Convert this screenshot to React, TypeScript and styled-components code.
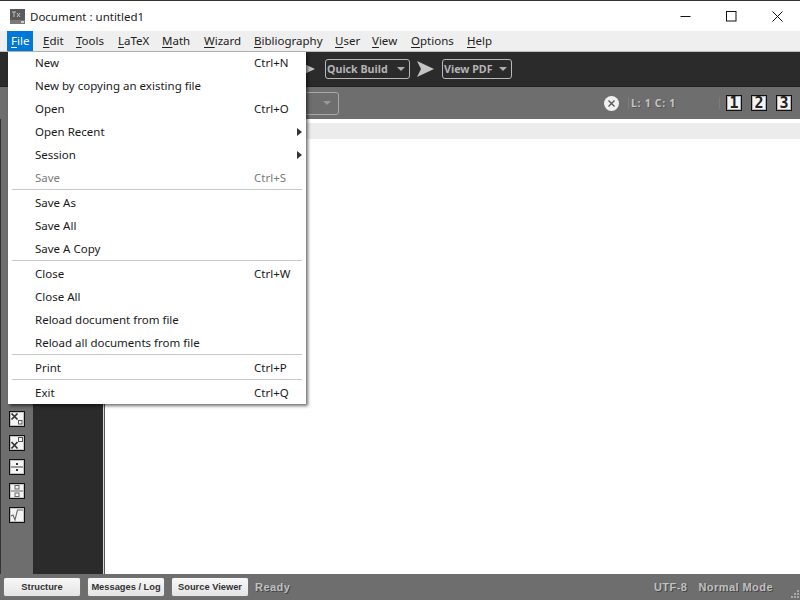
import React from 'react';
import styled, { createGlobalStyle } from 'styled-components';

const Global = createGlobalStyle`
  html, body { margin: 0; padding: 0; background: #fff; }
  #root { width: 800px; height: 600px; }
`;

const Win = styled.div`
  position: relative;
  width: 800px;
  height: 600px;
  overflow: hidden;
  display: flex;
  flex-direction: column;
  border-top: 1px solid #333;
  box-sizing: border-box;
  font-family: "Noto Sans", sans-serif;
  font-size: 11.5px;
  color: #111;
  background: #fff;
`;

const TitleBar = styled.div`
  height: 30px;
  display: flex;
  align-items: center;
  padding-left: 10px;
  flex: none;
`;
const TitleText = styled.span`
  margin-left: 5px;
  font-size: 11.5px;
  color: #222;
  flex: 1;
`;
const Ctl = styled.div`
  width: 46px;
  height: 30px;
  display: flex;
  align-items: center;
  justify-content: center;
`;

const MenuBar = styled.div`
  height: 21px;
  flex: none;
  background: #efefef;
  border-bottom: 1px solid #bdbdbd;
  display: flex;
  padding-left: 7px;
  box-sizing: border-box;
`;
const MenuItem = styled.div<{ $w: number; $on?: boolean }>`
  width: ${p => p.$w}px;
  margin-right: ${p => (p.$on ? 6 : 0)}px;
  padding-left: 4px;
  box-sizing: border-box;
  line-height: 20px;
  height: 20px;
  white-space: nowrap;
  background: ${p => (p.$on ? '#0078d7' : 'transparent')};
  color: ${p => (p.$on ? '#fff' : '#222')};
  u { text-underline-offset: 2px; }
`;

const Toolbar = styled.div`
  height: 35px;
  flex: none;
  background: #2b2b2b;
  border-bottom: 1px solid #222;
  box-sizing: border-box;
  display: flex;
  align-items: center;
  padding-left: 298px;
`;
const Drop = styled.div<{ $w: number; $ml: number }>`
  width: ${p => p.$w}px;
  margin-left: ${p => p.$ml}px;
  height: 20px;
  border: 1px solid #b8b8b8;
  border-radius: 3px;
  box-sizing: border-box;
  display: flex;
  align-items: center;
  justify-content: space-between;
  padding: 0 4px 0 1px;
  color: #b4b4b4;
  font-family: "Noto Sans", sans-serif;
  font-weight: 700;
  font-size: 10.7px;
`;
const Caret = styled.span<{ $c?: string }>`
  width: 0;
  height: 0;
  border-left: 4px solid transparent;
  border-right: 4px solid transparent;
  border-top: 4px solid ${p => p.$c || '#b0b0b0'};
`;

const SubBar = styled.div`
  height: 32px;
  flex: none;
  background: #6e6e6e;
  display: flex;
  align-items: center;
  padding-left: 139px;
  color: #c8c8c8;
`;
const Combo = styled.div`
  width: 200px;
  height: 23px;
  border: 1px solid #a8a8a8;
  border-radius: 3px;
  box-sizing: border-box;
  display: flex;
  align-items: center;
  justify-content: flex-end;
  padding-right: 7px;
`;
const ClearBtn = styled.div`
  width: 15px;
  height: 15px;
  margin-left: 265px;
  border-radius: 50%;
  background: #f0f0f0;
  display: flex;
  align-items: center;
  justify-content: center;
`;
const VSep = styled.div<{ $ml: number }>`
  width: 1px;
  height: 12px;
  margin-left: ${p => p.$ml}px;
  background: #7c7c7c;
`;
const Pos = styled.div`
  margin-left: 2px;
  width: 88px;
  font-family: "Noto Sans", sans-serif;
  font-weight: 700;
  font-size: 10.5px;
  letter-spacing: 0.7px;
  color: #c4c4c4;
  text-shadow: 1px 1px 0 #555;
`;
const NumBox = styled.div<{ $ml: number }>`
  width: 16px;
  height: 16px;
  margin-left: ${p => p.$ml}px;
  background: #f4f4f4;
  border: 1px solid #111;
  box-shadow: inset 0 0 0 1px rgba(0, 0, 0, 0.25);
  box-sizing: border-box;
  display: flex;
  align-items: center;
  justify-content: center;
  font-family: "DejaVu Sans Mono", monospace;
  font-weight: 700;
  font-size: 15px;
  color: #222;
`;

const Main = styled.div`
  flex: 1;
  display: flex;
  min-height: 0;
`;
const Side = styled.div`
  width: 32px;
  margin-left: 1px;
  background: #6e6e6e;
  display: flex;
  flex-direction: column;
  align-items: center;
  justify-content: flex-end;
  gap: 8px;
  padding-bottom: 51px;
  flex: none;
  box-sizing: border-box;
  box-shadow: -1px 0 0 #333;
`;
const Struct = styled.div`
  width: 70px;
  flex: none;
  background: #2b2b2b;
  border-right: 1px solid #d8d8d8;
  box-shadow: 1px 0 0 #555;
`;
const Editor = styled.div`
  flex: 1;
  background: #fff;
  padding-top: 4px;
  margin-left: 1px;
`;
const EditorLine = styled.div`
  height: 16px;
  background: #ececec;
`;
const MathBtn = styled.div`
  width: 16px;
  height: 16px;
  background: #f4f4f4;
  border: 1px solid #111;
  box-shadow: inset 0 0 0 1px rgba(0, 0, 0, 0.2);
  box-sizing: border-box;
  display: flex;
  margin-right: 1px;
`;

const Status = styled.div`
  height: 26px;
  flex: none;
  background: #6e6e6e;
  display: flex;
  align-items: center;
  padding: 0 0 0 4px;
  box-sizing: border-box;
  position: relative;
  font-family: "Liberation Sans", sans-serif;
`;
const StatusBtn = styled.div`
  width: 76px;
  height: 18px;
  margin-right: 8px;
  background: linear-gradient(#f8f8f8, #e4e4e4);
  border-radius: 2px;
  box-shadow: 0 0 1px #fff inset, 0 0 1px #999;
  display: flex;
  align-items: center;
  justify-content: center;
  font-weight: 700;
  font-size: 9.3px;
  color: #333;
`;
const StatusText = styled.div<{ $ml?: number; $mr?: number; $flex?: boolean }>`
  font-weight: 700;
  font-size: 11px;
  letter-spacing: 0.45px;
  color: #c0c0c0;
  text-shadow: 1px 1px 0 #444;
  margin-left: ${p => p.$ml ?? 0}px;
  margin-right: ${p => p.$mr ?? 0}px;
  flex: ${p => (p.$flex ? 1 : 'none')};
`;
const Grip = styled.svg`
  position: absolute;
  right: 0;
  bottom: 0;
`;

const Popup = styled.div`
  position: absolute;
  left: 8px;
  top: 51px;
  width: 298px;
  height: 352px;
  background: #fff;
  box-shadow: 0 -1px 0 #b0b0b0, 2px 2px 3px rgba(0, 0, 0, 0.55);
  box-sizing: border-box;
  color: #111;
`;
const Row = styled.div<{ $off?: boolean }>`
  height: 23px;
  line-height: 21px;
  padding-left: 27px;
  position: relative;
  display: flex;
  color: ${p => (p.$off ? '#7a7a7a' : '#1a1a1a')};
`;
const Label = styled.span`
  width: 219px;
  white-space: nowrap;
  flex: none;
`;
const Arrow = styled.span`
  position: absolute;
  right: 4px;
  top: 7px;
  width: 0;
  height: 0;
  border-top: 4.5px solid transparent;
  border-bottom: 4.5px solid transparent;
  border-left: 5px solid #333;
`;
const Sep = styled.div`
  height: 1px;
  margin: -1px 4px 2px;
  background: #c8c8c8;
`;

const menus: [string, string, number][] = [
  ['F', 'ile', 26],
  ['E', 'dit', 33],
  ['T', 'ools', 42],
  ['L', 'aTeX', 44],
  ['M', 'ath', 42],
  ['W', 'izard', 50],
  ['B', 'ibliography', 81],
  ['U', 'ser', 37],
  ['V', 'iew', 39],
  ['O', 'ptions', 56],
  ['H', 'elp', 40],
];

type It = { l: string; s?: string; off?: boolean; sub?: boolean } | 'sep';
const items: It[] = [
  { l: 'New', s: 'Ctrl+N' },
  { l: 'New by copying an existing file' },
  { l: 'Open', s: 'Ctrl+O' },
  { l: 'Open Recent', sub: true },
  { l: 'Session', sub: true },
  { l: 'Save', s: 'Ctrl+S', off: true },
  'sep',
  { l: 'Save As' },
  { l: 'Save All' },
  { l: 'Save A Copy' },
  'sep',
  { l: 'Close', s: 'Ctrl+W' },
  { l: 'Close All' },
  { l: 'Reload document from file' },
  { l: 'Reload all documents from file' },
  'sep',
  { l: 'Print', s: 'Ctrl+P' },
  'sep',
  { l: 'Exit', s: 'Ctrl+Q' },
];

const Play = ({ ml }: { ml: number }) => (
  <svg width="18" height="18" viewBox="0 0 18 18" style={{ marginLeft: ml }}>
    <path d="M0 1 L17 9 L0 17 L4 9 Z" fill="#c4c4c4" />
  </svg>
);

const MathIcon = ({ kind }: { kind: number }) => (
  <svg width="14" height="14" viewBox="0 0 14 14">
    {kind === 0 && (
      <>
        <path d="M1.5 1.5 L7.5 7.5 M7.5 1.5 L1.5 7.5" stroke="#333" strokeWidth="1.7" />
        <rect x="8.5" y="8.5" width="3.5" height="3.5" fill="none" stroke="#555" />
      </>
    )}
    {kind === 1 && (
      <>
        <path d="M1.5 6 L7.5 12.5 M7.5 6 L1.5 12.5" stroke="#333" strokeWidth="1.7" />
        <rect x="8.5" y="1.5" width="4" height="4" fill="none" stroke="#555" />
      </>
    )}
    {kind === 2 && (
      <>
        <rect x="1" y="6.5" width="12" height="1" fill="#444" />
        <rect x="6" y="3" width="2" height="2" fill="#333" />
        <rect x="6" y="9" width="2" height="2" fill="#333" />
      </>
    )}
    {kind === 3 && (
      <>
        <rect x="1" y="6.5" width="12" height="1" fill="#666" />
        <rect x="5" y="1.5" width="4" height="3.5" fill="none" stroke="#666" />
        <rect x="5" y="9" width="4" height="3.5" fill="none" stroke="#666" />
      </>
    )}
    {kind === 4 && (
      <path d="M1 8 L3 7 L5 12 L7.5 2 L13 2" fill="none" stroke="#666" strokeWidth="1.1" />
    )}
  </svg>
);

export default function App() {
  return (
    <Win>
      <Global />
      <TitleBar>
        <svg width="15" height="15" viewBox="0 0 15 15">
          <rect width="15" height="15" fill="#7a7a7a" />
          <rect x="0" y="0" width="15" height="11" fill="#5a5a5a" />
          <path d="M2 3 H6 M4 3 V8 M7 4 L10 8 M10 4 L7 8" stroke="#c0c0c0" strokeWidth="1" />
          <rect x="11" y="12" width="3" height="2" fill="#ccc" />
        </svg>
        <TitleText>Document : untitled1</TitleText>
        <Ctl>
          <svg width="11" height="11" viewBox="0 0 11 11">
            <path d="M0.5 5.5 H10.5" stroke="#111" />
          </svg>
        </Ctl>
        <Ctl>
          <svg width="11" height="11" viewBox="0 0 11 11">
            <rect x="0.5" y="0.5" width="9.5" height="9.5" fill="none" stroke="#111" />
          </svg>
        </Ctl>
        <Ctl>
          <svg width="11" height="11" viewBox="0 0 11 11">
            <path d="M0.5 0.5 L10.5 10.5 M10.5 0.5 L0.5 10.5" stroke="#111" />
          </svg>
        </Ctl>
      </TitleBar>
      <MenuBar>
        {menus.map(([a, b, w], i) => (
          <MenuItem key={a} $w={w} $on={i === 0}>
            <u>{a}</u>
            {b}
          </MenuItem>
        ))}
      </MenuBar>
      <Toolbar>
        <Play ml={0} />
        <Drop $w={85} $ml={9}>
          Quick Build<Caret />
        </Drop>
        <Play ml={7} />
        <Drop $w={70} $ml={7}>
          View PDF<Caret />
        </Drop>
      </Toolbar>
      <SubBar>
        <Combo>
          <Caret $c="#999" />
        </Combo>
        <ClearBtn>
          <svg width="9" height="9" viewBox="0 0 9 9">
            <path d="M1.5 1.5 L7.5 7.5 M7.5 1.5 L1.5 7.5" stroke="#555" strokeWidth="1.3" />
          </svg>
        </ClearBtn>
        <VSep $ml={9} />
        <Pos>L: 1 C: 1</Pos>
        <VSep $ml={0} />
        <NumBox $ml={6}>1</NumBox>
        <NumBox $ml={9}>2</NumBox>
        <NumBox $ml={9}>3</NumBox>
      </SubBar>
      <Main>
        <Side>
          {[0, 1, 2, 3, 4].map(k => (
            <MathBtn key={k}>
              <MathIcon kind={k} />
            </MathBtn>
          ))}
        </Side>
        <Struct />
        <Editor>
          <EditorLine />
        </Editor>
      </Main>
      <Status>
        <StatusBtn>Structure</StatusBtn>
        <StatusBtn>Messages / Log</StatusBtn>
        <StatusBtn>Source Viewer</StatusBtn>
        <StatusText $flex $ml={-1}>Ready</StatusText>
        <StatusText>UTF-8</StatusText>
        <StatusText $ml={11} $mr={27}>Normal Mode</StatusText>
        <Grip width="12" height="12" viewBox="0 0 12 12">
          {[[9, 2], [9, 5], [9, 8], [6, 5], [6, 8], [3, 8]].map(([x, y]) => (
            <rect key={`${x}-${y}`} x={x} y={y} width="2" height="2" fill="#a8a8a8" />
          ))}
        </Grip>
      </Status>
      <Popup>
        {items.map((it, i) =>
          it === 'sep' ? (
            <Sep key={i} />
          ) : (
            <Row key={i} $off={it.off}>
              <Label>{it.l}</Label>
              {it.s && <span>{it.s}</span>}
              {it.sub && <Arrow />}
            </Row>
          ),
        )}
      </Popup>
    </Win>
  );
}
